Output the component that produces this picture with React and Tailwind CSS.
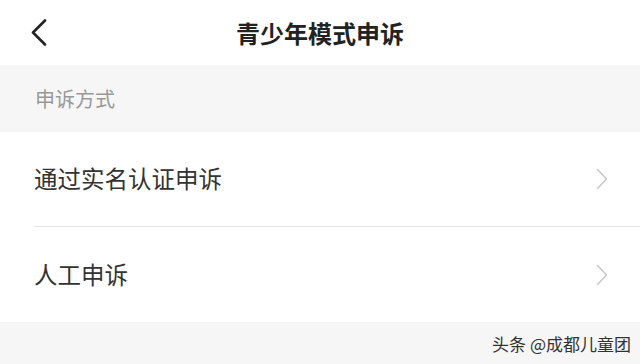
import { useState } from 'react';

const font = { fontFamily: '"Noto Sans CJK SC", "Noto Sans", sans-serif' };

const Chevron = ({ className = '' }) => (
  <svg width="12" height="22" viewBox="0 0 12 22" fill="none" className={className}>
    <path d="M1.5 1.5 L10.5 11 L1.5 20.5" stroke="currentColor" strokeWidth="1.6" strokeLinecap="round" strokeLinejoin="round" />
  </svg>
);

const Row = ({ label, divider, onClick }) => (
  <button
    onClick={onClick}
    className={`w-full h-[95px] flex items-center text-left ${divider ? 'border-b border-[#e6e6e6]' : ''}`}
  >
    <span className="flex-1 text-[23.5px] text-[#333] leading-none">{label}</span>
    <Chevron className="text-[#c9c9c9] mr-[32px]" />
  </button>
);

export default function App() {
  const [picked, setPicked] = useState(null);

  return (
    <div className="w-[640px] h-[364px] bg-[#f6f6f6] overflow-hidden flex flex-col" style={font}>
      <div className="h-[65px] shrink-0 bg-white relative flex items-center justify-center">
        <button className="absolute left-[30px] top-[19px] text-[#222]">
          <svg width="18" height="27" viewBox="0 0 18 27" fill="none">
            <path d="M15 1.5 L3 13.5 L15 25.5" stroke="currentColor" strokeWidth="2.6" strokeLinecap="round" strokeLinejoin="round" />
          </svg>
        </button>
        <h1 className="text-[24px] font-bold text-[#222] leading-none">青少年模式申诉</h1>
      </div>

      <div className="h-[67px] shrink-0 pl-[35px] flex items-center">
        <span className="text-[20px] text-[#999] leading-none">申诉方式</span>
      </div>

      <div className="bg-white pl-[34px] shrink-0">
        <Row label="通过实名认证申诉" divider onClick={() => setPicked('real')} />
        <Row label="人工申诉" onClick={() => setPicked('manual')} />
      </div>

      <div className="flex-1 flex items-center justify-end pr-[9px]">
        <span className="text-[17px] text-[#333] leading-none" data-picked={picked || ''}>头条 @成都儿童团</span>
      </div>
    </div>
  );
}
